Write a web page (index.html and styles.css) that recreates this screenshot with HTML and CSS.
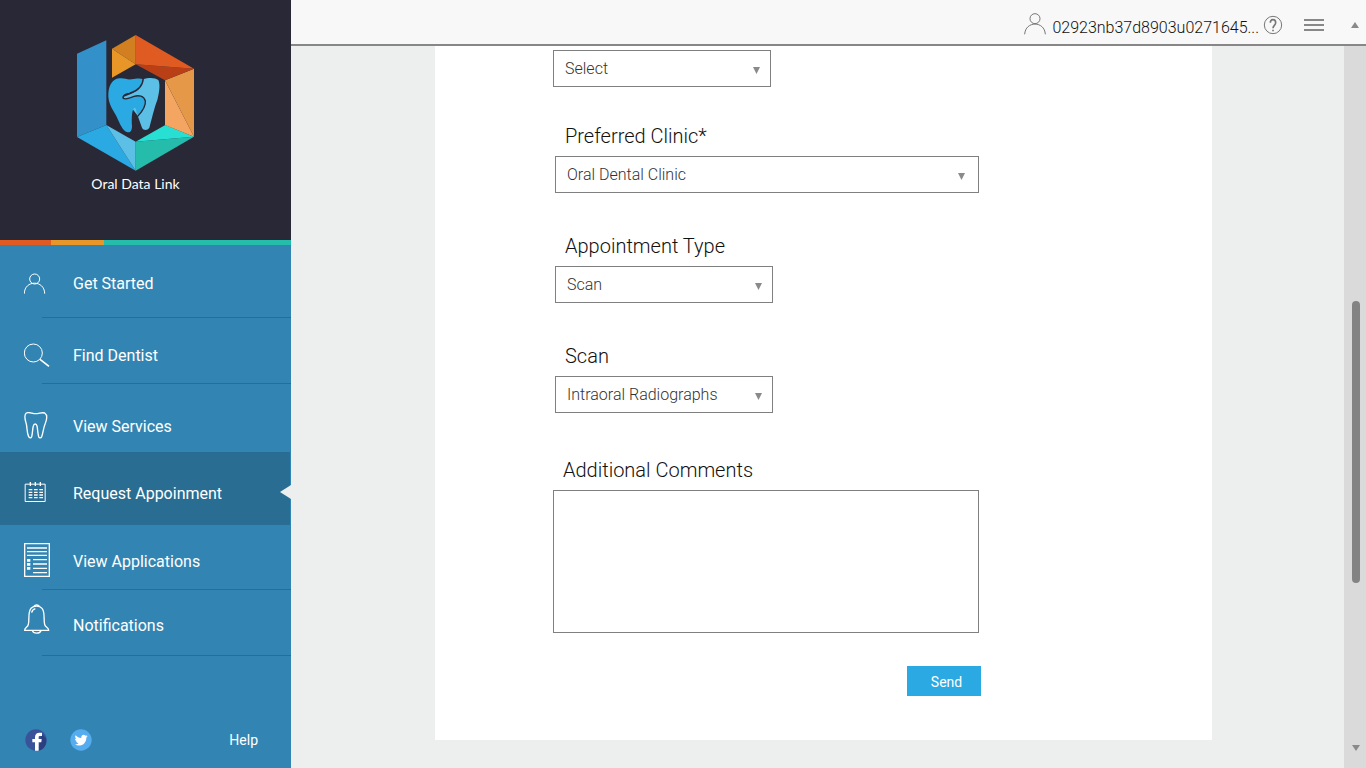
FILE: index.html
```html
<!DOCTYPE html>
<html lang="en">
<head>
<meta charset="utf-8">
<meta name="viewport" content="width=device-width, initial-scale=1">
<title>Oral Data Link</title>
<link rel="stylesheet" href="styles.css">
</head>
<body>
<div class="app">
  <aside class="sidebar">
    <div class="brand">
      <svg class="brand-logo" viewBox="51 27 354 411" aria-hidden="true">
        <path fill="#3390c8" d="M51 86l88-40v254L51 336z"/>
        <path fill="#2aa9e3" d="M51 336l88-36 88 137z"/>
        <path fill="#5bbfe6" d="M139 300l88 50v87z"/>
        <path fill="#25bcac" d="M227 350l175-15-175 102z"/>
        <path fill="#27dfd3" d="M227 350l89-50 86 35z"/>
        <path fill="#f4a562" d="M315 166v134l87 35z"/>
        <path fill="#e59847" d="M315 166l87-35v204z"/>
        <path fill="#b94016" d="M227 118l175 13-87 35z"/>
        <path fill="#df5b22" d="M227 30l175 101-175-13z"/>
        <path fill="#d17f21" d="M156 71l71-41v88z"/>
        <path fill="#e99628" d="M156 71l71 47-71 40z"/>
        <path fill="#5bbfe6" d="M249 163C265 157 285 157 295 165C302 180 297 205 292 225C282 250 275 285 268 308C262 317 250 317 246 308L233 272L190 216C215 208 245 195 249 163z"/>
        <path fill="#2aa9e3" d="M249 163C240 158 225 162 215 163C200 165 195 158 178 160C155 162 144 185 145 215C147 240 160 255 170 275C180 298 188 315 200 321C210 325 216 318 216 303C215 285 215 262 220 252C224 244 229 250 230 262L234 272C248 258 258 245 256 228C252 212 236 210 222 214C208 220 195 225 189 219C188 212 196 207 208 205C230 199 248 185 249 163z"/>
        <path fill="none" stroke="#292836" stroke-width="4" d="M250 160C248 185 230 199 208 205C196 207 188 212 189 219C195 225 208 220 222 214C236 210 252 212 256 228C258 245 248 258 233 274"/>
      </svg>
      <span class="brand-name">Oral Data Link</span>
    </div>
    <div class="stripe"><i class="stripe-red"></i><i class="stripe-orange"></i><i class="stripe-teal"></i></div>
    <nav>
      <ul class="menu">
        <li class="item item-start">
          <a class="link" href="#">
            <svg class="icon" width="22" height="21" viewBox="72 130 66 63"><circle cx="104" cy="148" r="15"/><path d="M73 192c0-42 61-42 61 0"/></svg>
            <span>Get Started</span>
          </a>
        </li>
        <li class="item item-find">
          <a class="link" href="#">
            <svg class="icon" width="26" height="24" viewBox="71 340 78 72"><circle cx="99" cy="370" r="27"/><path stroke-width="5" d="M119 389l27 21"/></svg>
            <span>Find Dentist</span>
          </a>
        </li>
        <li class="item item-services">
          <a class="link" href="#">
            <svg class="icon" width="24" height="28" viewBox="72 50 72 84"><path stroke-width="4" d="M79 53c10-4 17 2 28 2s18-5 27-2c9 6 6 21 2 31-6 14-7 30-11 40-2 5-7 5-9 0-3-10-3-24-5-32-2-8-9-8-11 0-3 9-2 24-5 32-2 5-7 4-9 0-6-12-4-26-7-38-3-10-9-26 0-33z"/></svg>
            <span>View Services</span>
          </a>
        </li>
        <li class="item item-request">
          <a class="link" href="#" aria-current="page">
            <svg class="icon" width="22" height="22" viewBox="73 261 66 66"><path d="M76.500 267.500h60v52h-60z"/><path stroke-width="4" d="M92 261v12m15-12v12m15-12v12"/><path stroke-width="4" stroke-dasharray="11 5" d="M87 284h43M87 292h43M87 300h43M87 308h43"/></svg>
            <span>Request Appoinment</span>
          </a>
        </li>
        <li class="item item-apps">
          <a class="link" href="#">
            <svg class="icon" width="26" height="36" viewBox="72 39 78 108"><path stroke-width="4" d="M74 41h74v98H74zM81 54h60M81 65h60M81 76h60M99 89h42M99 102h42M99 115h42M99 128h42"/><path stroke-width="10" stroke-dasharray="8 4" d="M86 87v34"/></svg>
            <span>View Applications</span>
          </a>
        </li>
        <li class="item item-notes">
          <a class="link" href="#">
            <svg class="icon" width="26" height="42" viewBox="72 222 78 126"><path stroke-width="4" d="M74 301c0-9 10-9 11-18 4-17-2-36 8-48 9-9 25-9 33 0 10 12 4 31 8 48 1 9 12 9 12 18zM102 229c3-6 13-6 16 0M97 302c3 10 22 10 26 0M95 248c1-6 5-10 11-12"/></svg>
            <span>Notifications</span>
          </a>
        </li>
      </ul>
    </nav>
    <footer class="side-foot">
      <a href="#" aria-label="Facebook"><svg width="22" height="22" viewBox="0 0 66 66"><circle cx="33" cy="33" r="32" fill="#39529a"/><path fill="#2b3f80" d="M50 15l12 12c8 24-12 39-23 38z"/><path fill="#fff" d="M30 65V40h-8V30h8v-6c0-9 6-13 13-13h8v10h-5c-4 0-5 1-5 4v5h9l-1 10h-8v25z"/></svg></a>
      <a href="#" aria-label="Twitter"><svg width="22" height="22" viewBox="0 0 66 66"><circle cx="33" cy="33" r="32" fill="#55acee"/><path fill="#fff" d="M53 21c-2 1-3 1-5 1 2-1 3-2 4-4-2 1-3 2-5 2-6-6-15-1-13 7-7 0-13-3-17-8-3 4-1 9 2 11-1 0-2 0-4-1 0 4 3 7 7 8h-4c1 3 4 5 8 6-4 3-8 4-12 3 17 10 35-1 35-20 2-2 3-3 4-5z"/></svg></a>
      <a class="help" href="#">Help</a>
    </footer>
  </aside>

  <div class="page">
    <header class="topbar">
      <a class="account" href="#">
        <svg class="line-icon" width="22" height="22" viewBox="0 0 66 66"><circle cx="33" cy="17" r="15"/><path d="M2 64c2-41 60-41 62 0"/></svg>
        <span>02923nb37d8903u0271645...</span>
      </a>
      <button class="tool tool-help" type="button" aria-label="Help">
        <svg class="line-icon" width="20" height="20" viewBox="0 0 60 60"><circle cx="30" cy="30" r="26"/><path stroke-width="5" d="M22 23c0-12 16-12 16 0 0 8-8 8-8 17M30 44v5"/></svg>
      </button>
      <button class="tool tool-menu" type="button" aria-label="Menu">
        <svg class="line-icon" width="20" height="14" viewBox="0 0 20 14"><path stroke-width="2" d="M0 2h20M0 7h20M0 12h20"/></svg>
      </button>
      <svg class="arrow" width="8" height="6" viewBox="0 0 8 6"><path d="M4 0l4 6H0z"/></svg>
    </header>
    <div class="body">
      <main class="content">
        <form class="card">
          <div class="field field-short field-first">
            <div class="select">
              <select aria-label="Option"><option>Select</option></select>
              <svg class="caret" width="7" height="7" viewBox="0 0 8 8"><path d="M0 0h8L4 8z"/></svg>
            </div>
          </div>
          <div class="field field-inset">
            <label for="clinic">Preferred Clinic*</label>
            <div class="select select-wide">
              <select id="clinic"><option>Oral Dental Clinic</option></select>
              <svg class="caret" width="7" height="7" viewBox="0 0 8 8"><path d="M0 0h8L4 8z"/></svg>
            </div>
          </div>
          <div class="field field-inset field-short">
            <label for="type">Appointment Type</label>
            <div class="select">
              <select id="type"><option>Scan</option></select>
              <svg class="caret" width="7" height="7" viewBox="0 0 8 8"><path d="M0 0h8L4 8z"/></svg>
            </div>
          </div>
          <div class="field field-inset field-short field-last">
            <label for="scan">Scan</label>
            <div class="select">
              <select id="scan"><option>Intraoral Radiographs</option></select>
              <svg class="caret" width="7" height="7" viewBox="0 0 8 8"><path d="M0 0h8L4 8z"/></svg>
            </div>
          </div>
          <div class="field field-comments">
            <label for="comments">Additional Comments</label>
            <textarea id="comments"></textarea>
          </div>
          <button class="send" type="submit">Send</button>
        </form>
      </main>
      <div class="scroll" aria-hidden="true">
        <div class="thumb"></div>
        <svg class="arrow" width="8" height="6" viewBox="0 0 8 6"><path d="M0 0h8L4 6z"/></svg>
      </div>
    </div>
  </div>
</div>
</body>
</html>
```

FILE: styles.css
```css
* { box-sizing: border-box; }
body { margin: 0; font-family: Roboto, "Liberation Sans", sans-serif; color: #111; }
a { color: inherit; text-decoration: none; }
svg { display: block; flex: none; }
button { font: inherit; border: 0; background: none; padding: 0; cursor: pointer; }

.app { display: grid; grid-template-columns: 291px 1fr; min-height: 100vh; }

/* Sidebar */
.sidebar { display: flex; flex-direction: column; background: #3285b3; color: #fff; }
.brand {
  display: flex; flex-direction: column; align-items: center;
  min-height: 240px; padding: 34px 20px 0 0; background: #292836;
}
.brand-logo { width: 118px; height: 137px; }
.brand-name { font: 400 14px/26px Lato, Roboto, sans-serif; }
.stripe { display: flex; height: 5px; }
.stripe-red { width: 51px; background: #df5b22; }
.stripe-orange { width: 53px; background: #e99628; }
.stripe-teal { flex: 1; background: #25bcac; }

.menu { list-style: none; margin: 0; padding: 0; }
.item {
  display: grid; position: relative; min-height: 66px;
  background: linear-gradient(#236f99, #236f99) right bottom / calc(100% - 42px) 1px no-repeat;
}
.link {
  display: grid; grid-template-columns: 49px 1fr; align-items: center;
  padding-left: 24px; font-size: 16px; line-height: 20px;
}
.link span { padding-top: 2px; }
.icon { fill: none; stroke: #fff; stroke-width: 3; }
.item-start { min-height: 73px; padding-top: 3px; }
.item-find { padding-top: 8px; }
.item-services { min-height: 68px; padding-top: 16px; background: none; }
.item-request { min-height: 73px; padding-top: 9px; margin-right: 1px; background: #296d92; }
.item-request::after {
  content: ""; position: absolute; right: -1px; top: 33px;
  border: solid transparent; border-width: 7px 11px 7px 0; border-right-color: #edefee;
}
.item-apps { min-height: 65px; padding-top: 7px; }
.item-notes { padding-top: 4px; }

.side-foot { display: flex; align-items: center; gap: 23px; margin-top: auto; padding: 16px 33px 17px 25px; }
.help { margin-left: auto; font-size: 14px; line-height: 20px; }

/* Top bar */
.page { display: flex; flex-direction: column; min-width: 0; }
.topbar {
  display: flex; align-items: center; justify-content: flex-end;
  height: 46px; padding: 6px 7px 0 0; background: #f8f8f8; border-bottom: 2px solid #878787;
}
.line-icon { fill: none; stroke: #777; stroke-width: 3; }
.account { display: flex; gap: 6px; font-size: 16px; font-weight: 300; line-height: 22px; }
.account svg { margin-top: 1px; }
.account span { padding-top: 5px; }
.tool-help { margin-left: 4px; }
.tool-menu { margin: 0 27px 0 21px; }
.tool-menu .line-icon { stroke: #888; }
.arrow, .caret { fill: #8a8a8a; }

/* Form */
.body { display: flex; flex: 1; }
.content { flex: 1; padding: 0 132px 28px 144px; background: #edefee; }
.card {
  display: flex; flex-direction: column; min-height: 694px;
  padding: 4px 231px 44px 118px; background: #fff;
}
.field { display: flex; flex-direction: column; gap: 8px; margin-bottom: 41px; }
.field-first { margin-bottom: 37px; }
.field-last { margin-bottom: 45px; }
.field-inset { margin-left: 2px; margin-right: 2px; }
.field-short { width: 218px; }
.field label { padding-left: 10px; font-size: 20px; font-weight: 300; line-height: 24px; }
.select { position: relative; }
.select select {
  appearance: none; width: 100%; height: 37px; padding: 0 32px 0 11px;
  font: 300 16px/20px Roboto, sans-serif; color: #333;
  background: #fff; border: 1px solid #808080; border-radius: 0;
}
.caret { position: absolute; right: 11px; top: 17px; pointer-events: none; }
.select-wide .caret { right: 14px; }
.field-comments { margin: 0 2px 33px 0; }
.field-comments textarea {
  display: block; width: 100%; height: 143px; padding: 8px 11px; resize: none;
  font: 300 16px/20px Roboto, sans-serif; border: 1px solid #808080; border-radius: 0;
}
.send {
  align-self: flex-end; min-width: 74px; height: 30px; padding: 2px 0 0 5px;
  font-size: 14px; color: #fff; background: #2aa9e3;
}

/* Scroll track */
.scroll {
  display: flex; flex-direction: column; justify-content: space-between; align-items: center;
  width: 22px; padding: 255px 0 17px 1px; background: #dadada;
}
.thumb { width: 8px; height: 282px; border-radius: 4px; background: #838383; }
```
